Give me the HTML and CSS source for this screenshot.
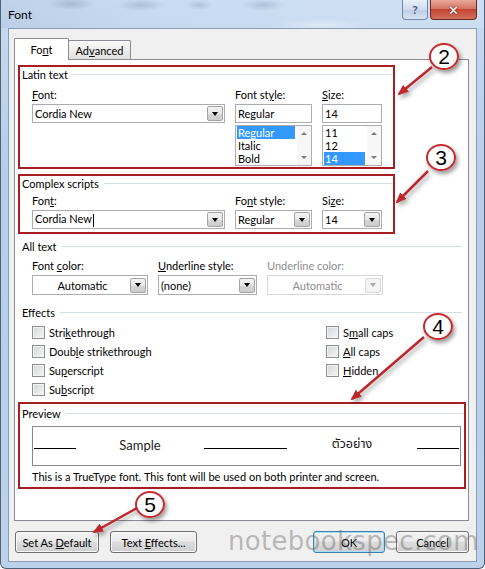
FILE: index.html
```html
<!DOCTYPE html>
<html lang="en">
<head>
  <meta charset="UTF-8">
  <title>Font</title>
  <link rel="stylesheet" href="styles.css">
</head>
<body>
  <div class="fenetre">
    <div class="titre">
      <span class="titre-texte">Font</span>
      <div class="caption">
        <span class="cap-aide">?</span>
        <span class="cap-fermer">✕</span>
      </div>
    </div>

    <div class="client">
      <div class="onglets">
        <div class="onglet actif">Fo<u>n</u>t</div>
        <div class="onglet">Ad<u>v</u>anced</div>
      </div>

      <div class="panneau">
        <!-- Latin text -->
        <div class="cadre latin">
          <div class="groupe">Latin text</div>
          <div class="grille grille-latin">
            <label><u>F</u>ont:</label>
            <label>Font st<u>y</u>le:</label>
            <label><u>S</u>ize:</label>
            <div class="combo"><span class="valeur">Cordia New</span><span class="bouton"><i class="tri"></i></span></div>
            <div class="champ">Regular</div>
            <div class="champ">14</div>
            <div></div>
            <div class="liste">
              <div class="items">
                <div class="item choisi">Regular</div>
                <div class="item">Italic</div>
                <div class="item">Bold</div>
              </div>
              <div class="defil"><i class="haut"></i><i class="bas"></i></div>
            </div>
            <div class="liste">
              <div class="items">
                <div class="item">11</div>
                <div class="item">12</div>
                <div class="item choisi">14</div>
              </div>
              <div class="defil"><i class="haut"></i><i class="bas"></i></div>
            </div>
          </div>
        </div>

        <!-- Complex scripts -->
        <div class="cadre complexe">
          <div class="groupe">Complex scripts</div>
          <div class="grille grille-complexe">
            <label>Fon<u>t</u>:</label>
            <label>Fo<u>n</u>t style:</label>
            <label>Si<u>z</u>e:</label>
            <div class="combo"><span class="valeur">Cordia New<span class="curseur"></span></span><span class="bouton"><i class="tri"></i></span></div>
            <div class="combo"><span class="valeur">Regular</span><span class="bouton"><i class="tri"></i></span></div>
            <div class="combo"><span class="valeur">14</span><span class="bouton"><i class="tri"></i></span></div>
          </div>
        </div>

        <!-- All text -->
        <div class="bloc tout">
          <div class="groupe">All text</div>
          <div class="grille grille-tout">
            <label>Font <u>c</u>olor:</label>
            <label><u>U</u>nderline style:</label>
            <label class="inactif">Underline color:</label>
            <div class="combo"><span class="valeur centre">Automatic</span><span class="bouton"><i class="tri"></i></span></div>
            <div class="combo"><span class="valeur">(none)</span><span class="bouton"><i class="tri"></i></span></div>
            <div class="combo inactif"><span class="valeur centre">Automatic</span><span class="bouton"><i class="tri"></i></span></div>
          </div>
        </div>

        <!-- Effects -->
        <div class="bloc effets">
          <div class="groupe">Effects</div>
          <div class="cases">
            <div class="colonne">
              <div class="option"><span class="case"></span>Stri<u>k</u>ethrough</div>
              <div class="option"><span class="case"></span>Doub<u>l</u>e strikethrough</div>
              <div class="option"><span class="case"></span>Su<u>p</u>erscript</div>
              <div class="option"><span class="case"></span>Su<u>b</u>script</div>
            </div>
            <div class="colonne">
              <div class="option"><span class="case"></span>S<u>m</u>all caps</div>
              <div class="option"><span class="case"></span><u>A</u>ll caps</div>
              <div class="option"><span class="case"></span><u>H</u>idden</div>
            </div>
          </div>
        </div>

        <!-- Preview -->
        <div class="cadre apercu">
          <div class="groupe">Preview</div>
          <div class="echantillon">
            <span class="trait court"></span>
            <span class="mot">Sample</span>
            <span class="trait long"></span>
            <span class="mot thai">ตัวอย่าง</span>
            <span class="trait court"></span>
          </div>
          <div class="note">This is a TrueType font. This font will be used on both printer and screen.</div>
        </div>
      </div>

      <div class="boutons">
        <button class="btn defaut">Set As <u>D</u>efault</button>
        <button class="btn effets-btn">Text <u>E</u>ffects...</button>
        <button class="btn ok">OK</button>
        <button class="btn annuler">Cancel</button>
      </div>
    </div>

    <div class="filigrane">notebookspec.com</div>

    <svg class="fleches" width="485" height="569" viewBox="0 0 485 569">
      <defs>
        <marker id="pointe" markerUnits="userSpaceOnUse" markerWidth="11" markerHeight="9" refX="9" refY="4.5" orient="auto">
          <path d="M0,0 L11,4.5 L0,9 Z" fill="#c0262c"/>
        </marker>
      </defs>
      <line x1="432" y1="67" x2="399" y2="94" marker-end="url(#pointe)"/>
      <line x1="428" y1="171" x2="397" y2="202" marker-end="url(#pointe)"/>
      <line x1="424" y1="337" x2="352" y2="399" marker-end="url(#pointe)"/>
      <line x1="137" y1="508" x2="94" y2="532" marker-end="url(#pointe)"/>
    </svg>

    <div class="bulle b2">2</div>
    <div class="bulle b3">3</div>
    <div class="bulle b4">4</div>
    <div class="bulle b5">5</div>
  </div>
</body>
</html>
```

FILE: styles.css
```css
body {
  margin: 0;
  width: 485px;
  height: 569px;
  overflow: hidden;
  font-family: Lato, "Noto Sans Thai", "DejaVu Sans", sans-serif;
  font-size: 11px;
  color: #000;
  background: #fff;
}
.fenetre {
  position: relative;
  width: 485px;
  height: 569px;
  box-sizing: border-box;
  background: linear-gradient(to bottom, #c7dbf1, #b6cee9 30%, #bcd2eb 100%);
  border: 1px solid #4f6177;
  border-top: none;
  border-radius: 0 0 6px 6px;
  display: flex;
  flex-direction: column;
}
/* blurred ribbon behind the glass title bar */
.titre {
  height: 28px;
  display: flex;
  align-items: flex-start;
  padding-left: 7px;
  background:
    radial-gradient(ellipse 24px 6px at 70px 4px, rgba(90,110,140,0.28), transparent),
    radial-gradient(ellipse 24px 6px at 140px 5px, rgba(90,110,140,0.25), transparent),
    radial-gradient(ellipse 14px 5px at 198px 5px, rgba(90,110,140,0.22), transparent),
    radial-gradient(ellipse 22px 6px at 262px 5px, rgba(90,110,140,0.25), transparent),
    radial-gradient(ellipse 45px 6px at 320px 25px, rgba(255,255,255,0.35), transparent),
    linear-gradient(to right, rgba(120,140,170,0.12), rgba(255,255,255,0) 30%, rgba(255,255,255,0.12) 65%);
}
.titre-texte {
  margin-top: 8px;
  line-height: 14px;
  font-size: 12px;
}
.caption {
  margin-left: auto;
  margin-right: 7px;
  display: flex;
  gap: 2px;
}
.cap-aide, .cap-fermer {
  height: 20px;
  box-sizing: border-box;
  border-radius: 0 0 4px 4px;
  display: flex;
  align-items: center;
  justify-content: center;
}
.cap-aide {
  width: 26px;
  border: 1px solid #7387a3;
  border-top: none;
  background: linear-gradient(to bottom, #e8f0fa, #cfdcee 50%, #bccde5 51%, #d6e3f3);
  color: #4b5b70;
  font-size: 12px;
  font-weight: bold;
}
.cap-fermer {
  width: 47px;
  border: 1px solid #6b2a24;
  border-top: none;
  background: linear-gradient(to bottom, #e9a99b, #d47664 45%, #c54430 50%, #d2705e);
  color: #fff;
  font-size: 13px;
  font-weight: bold;
  text-shadow: 0 0 2px #5a1a10;
}
.client {
  margin: 0 7px;
  height: 534px;
  box-sizing: border-box;
  border: 1px solid #8a9cb3;
  background: #f0f0f0;
  padding-top: 9px;
}
.onglets {
  display: flex;
  align-items: flex-end;
  height: 21px;
  padding-left: 5px;
}
.onglet {
  box-sizing: border-box;
  border: 1px solid #898c95;
  border-bottom: none;
  border-radius: 2px 2px 0 0;
  display: flex;
  align-items: center;
  justify-content: center;
}
.onglet.actif {
  position: relative;
  z-index: 1;
  width: 55px;
  height: 22px;
  margin-bottom: -1px;
  background: #fff;
}
.onglet:not(.actif) {
  width: 63px;
  height: 19px;
  margin-left: -1px;
  background: linear-gradient(to bottom, #fafafa, #ececec 50%, #e2e2e2);
}
.panneau {
  margin-left: 5px;
  width: 455px;
  height: 462px;
  box-sizing: border-box;
  border: 1px solid #898c95;
  background: #fff;
  padding: 5px 0 0 3px;
}
.cadre {
  box-sizing: border-box;
  border: 2px solid #a81d21;
  padding-left: 2px;
}
.groupe {
  height: 14px;
  display: flex;
  align-items: center;
}
.groupe::after {
  content: "";
  flex: 1;
  border-top: 1px solid #d5dfe5;
  margin-left: 5px;
}
.latin {
  width: 377px;
  height: 104px;
}
.complexe {
  width: 377px;
  height: 60px;
  margin-top: 5px;
}
.grille {
  display: grid;
  column-gap: 10px;
  row-gap: 2px;
  margin-left: 10px;
}
.grille label {
  line-height: 14px;
}
.grille-latin {
  grid-template-columns: 193px 77px 60px;
  grid-template-rows: 14px 19px 41px;
  margin-top: 7px;
}
.grille-complexe {
  grid-template-columns: 193px 77px 60px;
  grid-template-rows: 14px 19px;
  margin-top: 4px;
}
.grille-tout {
  grid-template-columns: 116px 99px 116px;
  grid-template-rows: 14px 20px;
  margin-top: 6px;
}
.combo, .champ {
  box-sizing: border-box;
  border: 1px solid #abadb3;
  background: #fff;
  display: flex;
  align-items: center;
  padding-left: 2px;
}
.valeur {
  flex: 1;
  white-space: nowrap;
}
.valeur.centre {
  text-align: center;
}
.bouton {
  width: 16px;
  height: 15px;
  margin-right: 1px;
  box-sizing: border-box;
  border: 1px solid #a3a3a3;
  border-radius: 2px;
  background: linear-gradient(to bottom, #f4f4f4, #e6e6e6 50%, #d6d6d6 51%, #cdcdcd);
  display: flex;
  align-items: center;
  justify-content: center;
}
.tri {
  width: 0;
  height: 0;
  border-left: 3.5px solid transparent;
  border-right: 3.5px solid transparent;
  border-top: 4px solid #000;
}
.curseur {
  display: inline-block;
  width: 1px;
  height: 13px;
  background: #000;
  vertical-align: middle;
  margin-left: 1px;
}
.inactif {
  color: #8d8d8d;
}
.combo.inactif {
  border-color: #d9d9d9;
}
.combo.inactif .bouton {
  border-color: #dadada;
  background: #f4f4f4;
}
.combo.inactif .tri {
  border-top-color: #a8a8a8;
}
.liste {
  box-sizing: border-box;
  border: 1px solid #abadb3;
  background: #fff;
  display: flex;
  padding: 0 0 0 1px;
}
.items {
  flex: 1;
  margin-right: 2px;
}
.item {
  height: 13px;
  line-height: 13px;
  padding-left: 1px;
}
.item.choisi {
  background: #3399ff;
  color: #fff;
}
.defil {
  width: 14px;
  background: #f7f7f7;
  display: flex;
  flex-direction: column;
  align-items: center;
  justify-content: space-between;
  padding: 6px 0;
  box-sizing: border-box;
}
.defil i {
  width: 0;
  height: 0;
  border-left: 3px solid transparent;
  border-right: 3px solid transparent;
}
.defil .haut {
  border-bottom: 3px solid #7a7a7a;
}
.defil .bas {
  border-top: 3px solid #7a7a7a;
}
.bloc {
  margin-left: 4px;
  margin-right: 6px;
}
.tout {
  margin-top: 5px;
}
.effets {
  margin-top: 10px;
}
.cases {
  display: flex;
  margin-top: 4px;
  margin-left: 10px;
}
.colonne:first-child {
  width: 294px;
}
.option {
  height: 19px;
  display: flex;
  align-items: center;
}
.case {
  width: 13px;
  height: 13px;
  box-sizing: border-box;
  border: 1px solid #8e8f8f;
  background: linear-gradient(135deg, #d3d6da, #f6f6f6);
  box-shadow: inset 0 0 0 1px #f3f3f3;
  margin-right: 4px;
}
.apercu {
  width: 448px;
  height: 87px;
  margin-top: 3px;
  padding-top: 2px;
}
.echantillon {
  margin: 6px 0 0 10px;
  width: 429px;
  height: 40px;
  box-sizing: border-box;
  border: 1px solid #8a8a8a;
  display: flex;
  align-items: center;
  gap: 22px;
  padding-left: 1px;
}
.trait {
  height: 1px;
  background: #000;
  margin-top: 5px;
}
.trait.court {
  width: 42px;
}
.trait.long {
  width: 83px;
}
.mot {
  width: 84px;
  text-align: center;
  font-size: 13px;
  color: #222;
  margin-bottom: 3px;
}
.mot.thai {
  width: 86px;
  font-family: "Noto Sans Thai", sans-serif;
  font-size: 12.5px;
  color: #111;
}
.note {
  margin: 4px 0 0 10px;
  line-height: 14px;
}
.boutons {
  display: flex;
  gap: 11px;
  margin-top: 10px;
  padding: 0 7px 0 6px;
}
.btn {
  height: 22px;
  box-sizing: border-box;
  border: 1px solid #707070;
  border-radius: 3px;
  background: linear-gradient(to bottom, #f2f2f2, #ebebeb 45%, #dddddd 50%, #cfcfcf);
  box-shadow: inset 0 0 0 1px #fafafa;
  font-family: inherit;
  font-size: 11px;
  color: #000;
  padding: 0;
}
.defaut {
  width: 84px;
}
.effets-btn {
  width: 87px;
}
.ok {
  width: 72px;
  margin-left: auto;
  border-color: #3c7fb1;
  box-shadow: inset 0 0 0 1px #a8dcf5;
}
.annuler {
  width: 73px;
}
.filigrane {
  position: absolute;
  left: 227px;
  top: 525px;
  font-family: "DejaVu Sans", sans-serif;
  font-size: 26px;
  line-height: 32px;
  letter-spacing: 0.3px;
  color: rgba(100, 100, 100, 0.42);
  pointer-events: none;
}
.fleches {
  position: absolute;
  left: -1px;
  top: 0;
  pointer-events: none;
  filter: drop-shadow(2px 3px 2px rgba(0,0,0,0.35));
}
.fleches line {
  stroke: #c0262c;
  stroke-width: 2.5;
}
.bulle {
  position: absolute;
  width: 30px;
  height: 27px;
  box-sizing: border-box;
  border: 2px solid #c42a2e;
  border-radius: 50%;
  background: radial-gradient(circle at 40% 35%, #fff 55%, #e2e2e2);
  box-shadow: 2px 3px 4px rgba(0,0,0,0.4);
  display: flex;
  align-items: center;
  justify-content: center;
  font-family: "Liberation Sans", sans-serif;
  font-size: 21px;
  line-height: 1;
}
.b2 { left: 428px; top: 43px; }
.b3 { left: 425px; top: 144px; }
.b4 { left: 422px; top: 313px; }
.b5 { left: 134px; top: 491px; }
```
